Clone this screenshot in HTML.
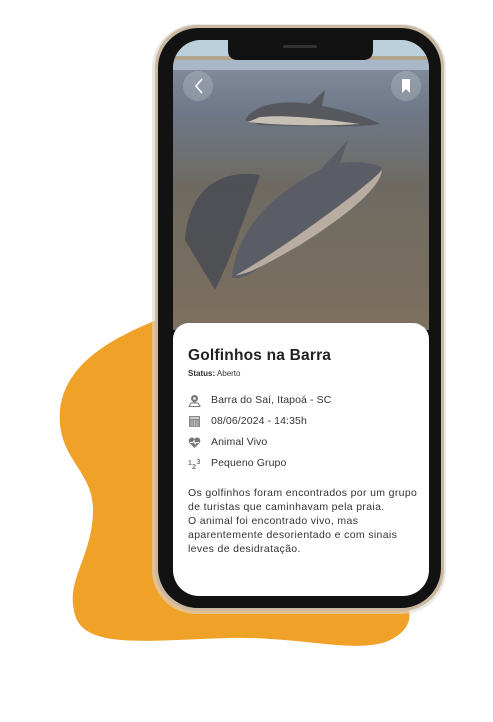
<!DOCTYPE html>
<html><head><meta charset="utf-8"><style>
body{margin:0;width:493px;height:722px;background:#fff;position:relative;overflow:hidden;font-family:"Liberation Sans",sans-serif}
.abs{position:absolute}
.card{position:absolute;left:173px;top:323px;width:256px;height:273px;background:#fff;border-radius:16px 16px 26px 26px}
.t{position:absolute;left:15px;color:#222;white-space:nowrap}
.row{position:absolute;left:15px;font-size:10.5px;color:#333;height:14px;letter-spacing:.1px}
.row span{position:absolute;left:23px;top:0;white-space:nowrap}
.row svg{position:absolute;left:0;top:0}
</style></head><body>
<svg class="abs" style="left:0;top:0" width="493" height="722">
<path d="M157 320 C120 335 65 360 60 410 C56 460 95 470 93 513 C91 560 65 580 75 615 C85 650 150 640 230 638 C300 636 360 655 390 640 C415 628 410 610 407 605 L400 330 Z" fill="#EFA128"/>
<rect x="152" y="24" width="294" height="590" rx="44" fill="#ddd8d0" opacity=".6"/>
<rect x="155" y="25" width="289" height="586" rx="42" fill="#c8b9a0"/>
<rect x="158" y="28" width="283" height="580" rx="40" fill="#121212"/>
<defs><clipPath id="sc"><rect x="173" y="40" width="256" height="556" rx="28"/></clipPath>
<linearGradient id="sand" x1="0" y1="0" x2="0" y2="1"><stop offset="0" stop-color="#8a96a6"/><stop offset=".25" stop-color="#6f7888"/><stop offset=".5" stop-color="#6e6a62"/><stop offset="1" stop-color="#7d705e"/></linearGradient></defs>
<g clip-path="url(#sc)">
<rect x="173" y="40" width="256" height="290" fill="url(#sand)"/>
<rect x="173" y="40" width="256" height="16" fill="#bcd0dc"/>
<rect x="173" y="56" width="256" height="4" fill="#b3a68c"/>
<rect x="173" y="60" width="256" height="10" fill="#a9b8c8"/>
<path d="M185 240 C190 180 230 170 260 175 C240 230 230 260 215 290 Z" fill="#3f4450" opacity=".7"/>
<path d="M245 120 C255 103 285 100 310 104 L325 90 L322 106 C345 110 370 118 380 124 C360 128 300 126 260 125 Z" fill="#56585e"/>
<path d="M248 122 C280 126 330 126 360 124 C330 120 290 114 260 117 Z" fill="#c8bfb5"/>
<path d="M232 278 C235 240 260 200 320 170 L348 140 L340 163 C360 160 380 165 382 168 C370 190 320 225 275 255 C260 268 245 280 232 278 Z" fill="#5b5d66"/>
<path d="M236 275 C260 262 300 235 340 205 C360 190 378 175 382 170 C380 190 340 220 300 245 C270 262 250 274 236 275 Z" fill="#b9aca0"/>
<circle cx="198" cy="86" r="15" fill="#ffffff" opacity=".18"/>
<circle cx="406" cy="86" r="15" fill="#ffffff" opacity=".18"/>
<path d="M202 79 L196 86 L202 93" stroke="#fff" stroke-width="1.6" fill="none"/>
<path d="M402 79 H410 V93 L406 89 L402 93 Z" fill="#fff"/>
</g>
<path d="M228 40 H373 V50 Q373 60 363 60 H238 Q228 60 228 50 Z" fill="#121212"/>
<rect x="283" y="45" width="34" height="3" rx="1.5" fill="#333"/>
</svg>
<div class="card">
<div class="t" style="top:24px;font-size:15.5px;font-weight:bold;letter-spacing:.2px">Golfinhos na Barra</div>
<div class="t" style="top:46px;font-size:8px;color:#333"><b>Status:</b> Aberto</div>
<div class="row" style="top:71px"><svg width="13" height="13" viewBox="0 0 13 13"><circle cx="6.5" cy="4.5" r="3.5" fill="#777"/><circle cx="6.5" cy="4.5" r="1.3" fill="#fff"/><path d="M6.5 9 L4 6.5 H9Z" fill="#777"/><path d="M1 12.5 L3 9 H10 L12 12.5 Z" fill="none" stroke="#777" stroke-width="1"/></svg><span>Barra do Saí, Itapoá - SC</span></div>
<div class="row" style="top:92px"><svg width="13" height="13" viewBox="0 0 13 13"><rect x="1" y="1" width="11" height="11" fill="#888"/><rect x="2" y="2" width="9" height="2" fill="#ccc"/><path d="M2 6h9M2 8h9M2 10h9M4 5v7M6.5 5v7M9 5v7" stroke="#ccc" stroke-width=".6"/></svg><span>08/06/2024 - 14:35h</span></div>
<div class="row" style="top:113px"><svg width="13" height="13" viewBox="0 0 13 13"><path d="M6.5 12 L1.5 7 C-0.5 4.5 1.5 1.5 4 1.5 C5.2 1.5 6 2.3 6.5 3 C7 2.3 7.8 1.5 9 1.5 C11.5 1.5 13.5 4.5 11.5 7 Z" fill="#777"/><path d="M2 6.5 H5 L6 4.5 L7.2 8 L8 6.5 H11" stroke="#fff" stroke-width=".9" fill="none"/></svg><span>Animal Vivo</span></div>
<div class="row" style="top:134px"><svg width="14" height="13" viewBox="0 0 14 13"><text x="0" y="8" font-size="7" font-weight="bold" fill="#777" font-family="Liberation Sans">1</text><text x="4" y="12" font-size="7" font-weight="bold" fill="#777" font-family="Liberation Sans">2</text><text x="8.5" y="7" font-size="7" font-weight="bold" fill="#777" font-family="Liberation Sans">3</text></svg><span>Pequeno Grupo</span></div>
<div class="t" style="top:163px;font-size:10.5px;line-height:14px;color:#333;letter-spacing:.35px">Os golfinhos foram encontrados por um grupo<br>de turistas que caminhavam pela praia.<br>O animal foi encontrado vivo, mas<br>aparentemente desorientado e com sinais<br>leves de desidratação.</div>
</div>
</body></html>
